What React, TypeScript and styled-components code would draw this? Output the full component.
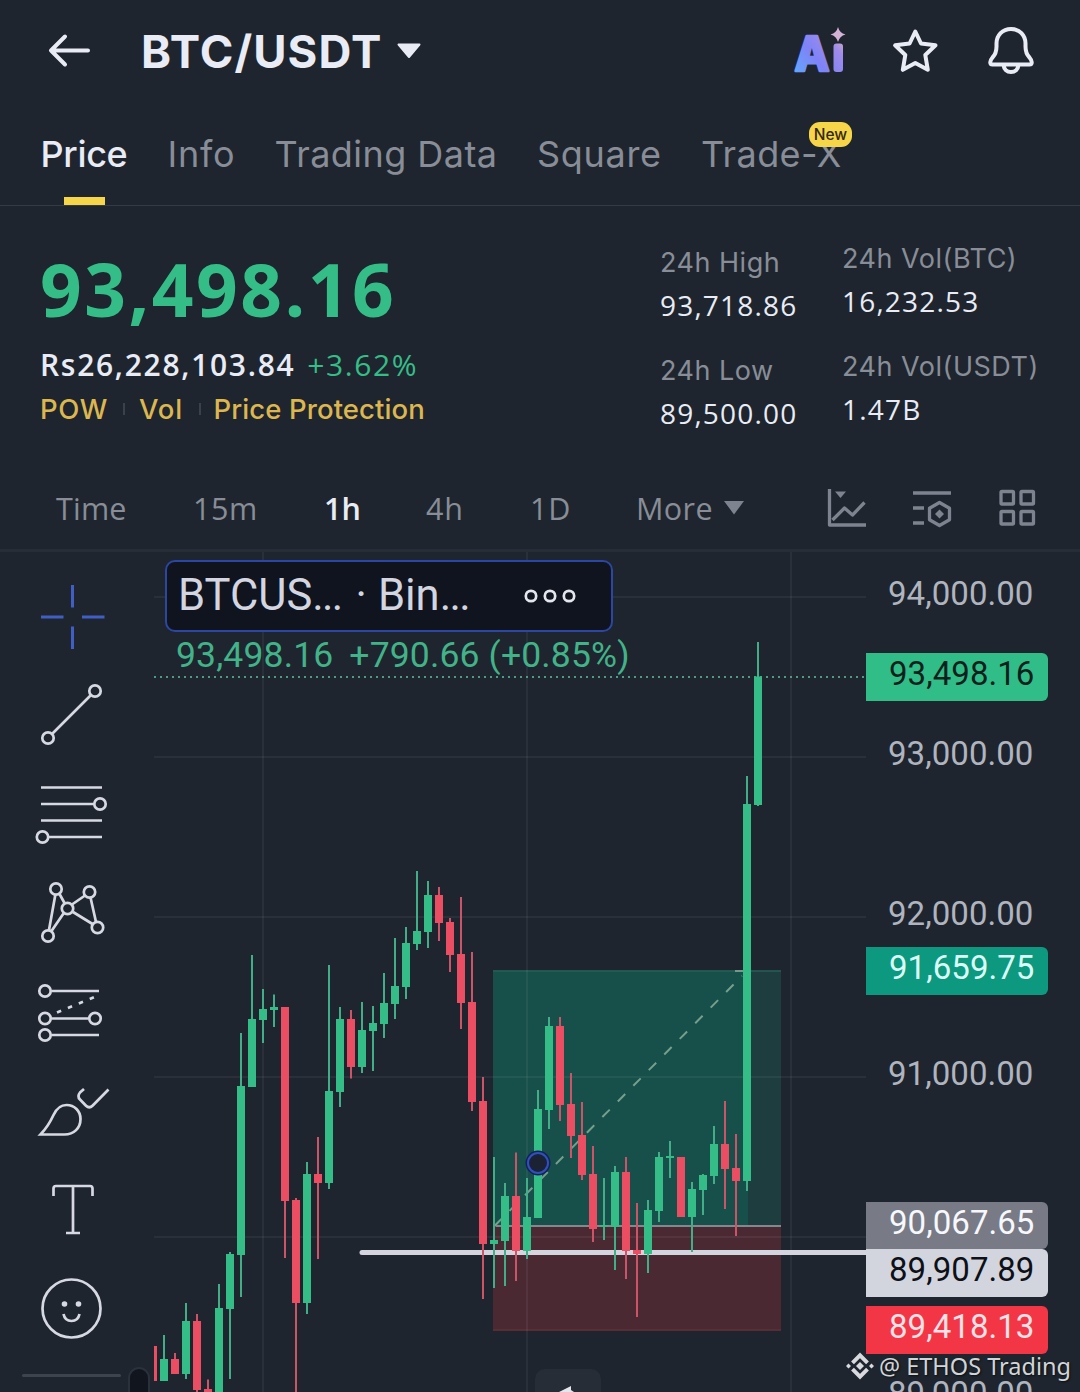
import React from "react";
import styled, { createGlobalStyle } from "styled-components";

const c = {
  bg: "#1e252e",
  text: "#e9ecf5",
  muted: "#888d97",
  icon: "#7e8390",
  tool: "#d6d9e2",
  green: "#35bd88",
  red: "#eb4e63",
  yellow: "#f7d549",
  gold: "#dcb64f",
};

const numerals = `"Open Sans", "Liberation Sans", sans-serif`;

const GlobalStyle = createGlobalStyle`
  *, *::before, *::after { box-sizing: border-box; }
  body { margin: 0; background: ${c.bg}; }
`;

const Page = styled.main`
  position: relative;
  width: 1080px;
  height: 1392px;
  overflow: hidden;
  display: flex;
  flex-direction: column;
  background: ${c.bg};
  color: ${c.text};
  font-family: Inter, "Liberation Sans", sans-serif;
  white-space: nowrap;
  svg { display: block; flex: none; }
`;

/* ---------- header ---------- */

const Header = styled.header`
  height: 102px;
  display: flex;
  align-items: center;
  padding: 0 44px 0 48px;
`;

const Title = styled.h1`
  width: 256px;
  margin: 0 0 0 51px;
  font-size: 45.5px;
  font-weight: 650;
  line-height: 60px;
  padding-top: 1px;
  letter-spacing: 1.1px;
`;

const Actions = styled.div`
  margin-left: auto;
  display: flex;
  align-items: center;
  gap: 48px;
  svg:first-child { margin-right: -1.5px; }
`;

const Tabs = styled.nav`
  height: 104px;
  display: flex;
  padding-left: 40.5px;
  border-bottom: 1px solid #343b46;
`;

const Tab = styled.div<{ $active?: boolean; $track: number; $width: number }>`
  position: relative;
  width: ${(p) => p.$width}px;
  height: 103px;
  padding-top: 0.5px;
  line-height: 103px;
  font-size: 36px;
  font-weight: ${(p) => (p.$active ? 500 : 400)};
  letter-spacing: ${(p) => p.$track}px;
  color: ${(p) => (p.$active ? c.text : c.muted)};
  ${(p) =>
    p.$active &&
    `&::after {
      content: "";
      position: absolute;
      left: 23.5px;
      bottom: 0;
      width: 41px;
      height: 8px;
      background: ${c.yellow};
    }`}
`;

const NewBadge = styled.span`
  position: absolute;
  left: 108px;
  top: 20px;
  width: 43px;
  height: 25px;
  border-radius: 11px;
  background: ${c.yellow};
  color: #33290c;
  font-size: 15.5px;
  font-weight: 500;
  line-height: 25px;
  letter-spacing: 0;
  text-align: center;
`;

/* ---------- summary ---------- */

const Summary = styled.section`
  height: 262px;
  display: grid;
  grid-template-columns: 620px 182px 1fr;
  padding-left: 40px;
`;

const PriceBlock = styled.div`
  padding-top: 41px;
`;

const BigPrice = styled.div`
  height: 96px;
  line-height: 84px;
  font-family: ${numerals};
  font-size: 73px;
  font-weight: 700;
  letter-spacing: 2.5px;
  color: ${c.green};
`;

const Fiat = styled.div`
  display: flex;
  gap: 12px;
  line-height: 44px;
  font-family: ${numerals};
  font-size: 30px;
  font-weight: 600;
  letter-spacing: 1.7px;
`;

const Change = styled.span`
  font-weight: 400;
  letter-spacing: 1.6px;
  color: ${c.green};
`;

const Tags = styled.div`
  display: grid;
  grid-template-columns: 83px 16px 59.5px 15px auto;
  align-items: center;
  justify-content: start;
  line-height: 44px;
  font-size: 27.5px;
  font-weight: 500;
  color: ${c.gold};
`;

const Tag = styled.span<{ $track: number }>`
  letter-spacing: ${(p) => p.$track}px;
`;

const Separator = styled.i`
  width: 2px;
  height: 12px;
  background: #3a414c;
`;

const Stats = styled.dl<{ $raised?: boolean }>`
  margin: 0;
  padding-top: ${(p) => (p.$raised ? 31 : 35)}px;
  display: flex;
  flex-direction: column;
  font-size: 27px;
  line-height: 43px;
`;

const StatLabel = styled.dt`
  letter-spacing: 0.5px;
  color: ${c.muted};
`;

const StatValue = styled.dd`
  margin: 0 0 22px;
  font-family: ${numerals};
  font-size: 28px;
  letter-spacing: 1.2px;
  color: ${c.text};
`;

/* ---------- timeframes ---------- */

const Timeframes = styled.nav`
  height: 81px;
  display: grid;
  grid-template-columns: 137px 131px 102px 104px 106px 88px 103px 85px 86px 1fr;
  align-items: center;
  padding: 0 0 1px 56px;
  font-family: ${numerals};
  font-size: 30.5px;
  color: ${c.muted};
`;

const Frame = styled.span<{ $active?: boolean; $track: number }>`
  letter-spacing: ${(p) => p.$track}px;
  font-weight: ${(p) => (p.$active ? 600 : 400)};
  color: ${(p) => (p.$active ? c.text : c.muted)};
`;

/* ---------- chart ---------- */

const ChartArea = styled.section`
  position: relative;
  height: 843px;
  display: grid;
  grid-template-columns: 154px 712px 214px;
  border-top: 3px solid #262d37;
  font-family: Roboto, "Liberation Sans", sans-serif;
`;

const Tools = styled.aside`
  position: relative;
  height: 840px;
  padding-top: 15px;
  overflow: hidden;
`;

const ToolDivider = styled.div`
  width: 99px;
  height: 3px;
  margin: 15px 0 0 22px;
  border-radius: 2px;
  background: #3d444e;
`;

const Handle = styled.div`
  position: absolute;
  left: 128px;
  top: 815px;
  width: 22px;
  height: 40px;
  border: 2px solid #2a313b;
  border-radius: 11px;
  background: #11151e;
`;

const Plot = styled.div`
  position: relative;
  height: 840px;
  overflow: hidden;
`;

const Legend = styled.div`
  position: absolute;
  left: 11px;
  top: 8px;
`;

const Symbol = styled.div`
  width: 448px;
  height: 72px;
  display: flex;
  align-items: center;
  padding: 0 34px 2px 11px;
  border: 2px solid #2b46a3;
  border-radius: 10px;
  background: #10141e;
  color: #d3d6e0;
  font-size: 43.5px;
  svg { margin: 2px 0 0 auto; }
`;

const Ellipsis = styled.span`
  letter-spacing: -1.7px;
`;

const Dot = styled.span`
  margin: 0 11px 0 14px;
`;

const Ohlc = styled.div`
  display: flex;
  gap: 16px;
  padding-left: 11px;
  font-size: 35.5px;
  line-height: 46px;
  letter-spacing: 0.15px;
  color: #42b389;
`;

const BackButton = styled.div`
  position: absolute;
  left: 381px;
  top: 817px;
  width: 66px;
  height: 46px;
  border-radius: 10px;
  background: #272d37;
`;

const Axis = styled.div`
  height: 840px;
  overflow: hidden;
`;

const AxisItem = styled.div<{ $gap: number; $h?: number; $bg?: string; $fg?: string }>`
  width: 182px;
  height: ${(p) => p.$h ?? 48}px;
  margin-top: ${(p) => p.$gap}px;
  padding-left: ${(p) => (p.$bg ? 23 : 22)}px;
  border-radius: 0 6px 6px 0;
  background: ${(p) => p.$bg ?? "transparent"};
  color: ${(p) => p.$fg ?? "#b0b4bf"};
  font-size: 33px;
  line-height: 42px;
  letter-spacing: 0.05px;
`;

const Watermark = styled.div`
  position: absolute;
  left: 846px;
  top: 1350.5px;
  display: flex;
  align-items: center;
  gap: 5px;
  height: 30px;
  color: #d2d4d8;
  font: 400 23.5px/30px "Noto Sans", sans-serif;
  text-shadow: 1px 1px 2px rgba(0, 0, 0, 0.6);
`;

/* ---------- data ---------- */

// [up, high, body top, body bottom, low] in page pixels; one candle every 11px
type Candle = [0 | 1, number, number, number, number];
const candles: Candle[] = [
  [0, 1346, 1346, 1381, 1381], [1, 1335, 1359, 1381, 1381], [0, 1353, 1359, 1374, 1374],
  [1, 1303, 1321, 1374, 1379], [0, 1314, 1321, 1390, 1400], [0, 1379.5, 1389, 1400, 1400],
  [1, 1284, 1308, 1400, 1400], [1, 1252, 1254, 1309, 1379], [1, 1033, 1086, 1255, 1297],
  [1, 955, 1019, 1087, 1087], [1, 989, 1009, 1020, 1043], [1, 994.5, 1007, 1010, 1027],
  [0, 1007, 1007, 1201, 1258], [0, 1198, 1200, 1303, 1400], [1, 1162, 1174, 1303, 1314],
  [0, 1137, 1174, 1183, 1259], [1, 965, 1091, 1183, 1189], [1, 1007, 1019, 1092, 1107],
  [0, 1010, 1019, 1067, 1078.5], [1, 1002, 1030, 1067, 1073], [1, 1006, 1023, 1031, 1071],
  [1, 973, 1003, 1024, 1038], [1, 938, 986, 1004, 1019], [1, 927, 943, 987, 999],
  [1, 871, 931, 944, 950], [1, 881, 895, 932, 948], [0, 887, 895, 923, 941],
  [0, 918, 922, 955, 972], [0, 897, 954, 1003, 1029], [0, 952, 1002, 1102, 1111],
  [0, 1077, 1101, 1244, 1299], [1, 1157, 1240, 1244, 1288], [1, 1183, 1196, 1241, 1286],
  [0, 1152.5, 1196, 1251, 1281], [1, 1178, 1217, 1251, 1259], [1, 1090, 1109, 1218, 1218],
  [1, 1017, 1026, 1110, 1129], [0, 1017, 1026, 1105, 1121], [0, 1073, 1104, 1136, 1158],
  [0, 1102, 1135, 1175, 1180], [0, 1146, 1174, 1229, 1242], [1, 1178, 1225, 1226.5, 1240],
  [1, 1166, 1172, 1227, 1270], [0, 1157, 1172, 1251, 1279], [0, 1203, 1250, 1254, 1317],
  [1, 1200, 1210, 1254, 1273], [1, 1152, 1157, 1211, 1222], [1, 1141, 1156, 1158, 1178],
  [0, 1157, 1157, 1217, 1217], [1, 1182, 1189, 1217, 1252], [1, 1174, 1175, 1190, 1215],
  [1, 1126, 1144, 1176, 1184], [0, 1101, 1144, 1169, 1209], [0, 1134, 1168, 1181, 1236],
  [1, 776, 804, 1181, 1191], [1, 642, 676.5, 805, 806],
];

const gridY = [597, 757, 917, 1077, 1237];
const gridX = [263, 527, 791];

const axisItems = [
  { t: "94,000.00", gap: 21 },
  { t: "93,498.16", gap: 32, bg: "#31bd87", fg: "#0b1f1c" },
  { t: "93,000.00", gap: 32 },
  { t: "92,000.00", gap: 112 },
  { t: "91,659.75", gap: 6, bg: "#0d9880", fg: "#dcfff6" },
  { t: "91,000.00", gap: 58 },
  { t: "90,067.65", gap: 101, h: 47, bg: "#787b86", fg: "#f7f8fc" },
  { t: "89,907.89", gap: 0, bg: "#d2d5de", fg: "#0d1017" },
  { t: "89,418.13", gap: 9, bg: "#f23645", fg: "#ffe3e8" },
  { t: "89,000.00", gap: 19 },
];

/* ---------- drawings ---------- */

function CandleChart() {
  return (
    <svg width="712" height="840" viewBox="154 552 712 840">
      <rect x="493" y="970.5" width="288" height="255.5" fill="#1d3d3e" />
      <rect x="493" y="970.5" width="255" height="255.5" fill="#174f4a" />
      <rect x="493" y="1226" width="288" height="104.5" fill="#4b2933" />
      <path d="M493 971H781" stroke="#265f55" strokeWidth="1.5" />
      <path d="M493 1330H781" stroke="#5f3039" strokeWidth="1.5" />
      <g stroke="#fff" strokeOpacity=".055" strokeWidth="2">
        {gridY.map((y) => <path key={y} d={`M154 ${y}H866`} />)}
        {gridX.map((x) => <path key={x} d={`M${x} 552V1392`} />)}
      </g>
      <path d="M494 1226.500L742 976" stroke="#7fa893" strokeOpacity=".9" strokeWidth="2" strokeDasharray="10.5 11.5" />
      <path d="M735 971H744" stroke="#74998a" strokeWidth="2" />
      <path d="M496 1226H781" stroke="#82888c" strokeWidth="2" />
      <path d="M362 1252.500H866" stroke="#d3d4de" strokeWidth="5" />
      <circle cx="362" cy="1252.500" r="2.500" fill="#d3d4de" />
      <path d="M154 677H866" stroke="#4f9b83" strokeWidth="2" strokeDasharray="2 4" />
      {candles.map(([up, high, top, bottom, low], i) => {
        const x = 153 + i * 11;
        return (
          <g key={i}>
            <rect x={x - 1} y={high} width="2" height={low - high} fill={up ? "#41ae88" : "#cb5468"} />
            <rect x={x - 4} y={top} width="8" height={bottom - top} fill={up ? c.green : c.red} />
          </g>
        );
      })}
      <circle cx="538" cy="1163" r="10.500" fill="#1a2233" stroke="#14205c" strokeWidth="4" />
      <circle cx="538" cy="1163" r="10" fill="none" stroke="#3350b4" strokeWidth="2" />
    </svg>
  );
}

const toolDrawings: React.ReactNode[] = [
  <path key="cross" stroke="#3f5fc4" strokeWidth="3" d="M72.500 585v22.500M72.500 626.500V649M41 617h22.500M82 617h22.500" />,
  <g key="trend">
    <path d="M52.500 733.500L90.500 695.500" />
    <circle cx="48" cy="738" r="5.700" /><circle cx="95" cy="691" r="5.700" />
  </g>,
  <g key="fib">
    <path d="M41 787.500h61M41 804h53M41 820.500h61M49 837h53" />
    <circle cx="100" cy="804" r="5.700" /><circle cx="42.500" cy="837" r="5.700" />
  </g>,
  <g key="pattern">
    <path d="M55.300 895L49 930M59.500 894l5 9M72 904.500l13-9M90.500 897.500l5.500 24.500M73 912l19.500 12M63.500 913.500L51.500 931" />
    <circle cx="56" cy="889" r="5.700" /><circle cx="89.500" cy="892" r="5.700" /><circle cx="67.500" cy="908.500" r="5.700" />
    <circle cx="97.500" cy="927.500" r="5.700" /><circle cx="48" cy="936" r="5.700" />
  </g>,
  <g key="position">
    <path d="M51.500 991H99M51.500 1018.500h37M51.500 1035H99" />
    <path d="M57 1012.500L97 996" strokeDasharray="4.500 7.300" />
    <circle cx="45" cy="991" r="5.700" /><circle cx="45" cy="1018.500" r="5.700" /><circle cx="95" cy="1018.500" r="5.700" /><circle cx="45" cy="1035" r="5.700" />
  </g>,
  <path key="brush" d="M40.500 1134.500c7.500-8 10.500-14 13-19.500c3-6.500 7-10 13-10c8 0 14 6 14 14c0 9-6.500 15.500-16 15.500zM84 1089l-4 3.500c-2 2.500-2 5 0 7l6 6.200c2 2 4.500 2 6.500 0L108.500 1089.500" />,
  <path key="text" d="M53.500 1196v-7.500q0-2.500 2.500-2.500h34q2.500 0 2.500 2.500v7.500M73 1186v47M66 1233h14" />,
  <g key="emoji">
    <circle cx="71.500" cy="1308.500" r="29" />
    <path d="M63.500 1314c1 5 4 7 8 7s7-2 8-7" />
    <circle cx="64.500" cy="1304" r="2.800" fill={c.tool} stroke="none" /><circle cx="78.500" cy="1304" r="2.800" fill={c.tool} stroke="none" />
  </g>,
];

const ToolIcon = ({ index, children }: { index: number; children: React.ReactNode }) => (
  <svg width="154" height="99" viewBox={`0 ${567 + index * 99} 154 99`} fill="none" stroke={c.tool} strokeWidth="2.700">
    {children}
  </svg>
);

const AiLogo = () => (
  <svg width="54" height="50" viewBox="793 26 54 50">
    <defs>
      <linearGradient id="ai" gradientUnits="userSpaceOnUse" x1="794" y1="72" x2="846" y2="32">
        <stop offset="0" stopColor="#62a8fb" />
        <stop offset=".4" stopColor="#7f83f7" />
        <stop offset=".75" stopColor="#a08ceb" />
        <stop offset="1" stopColor="#f0bda9" />
      </linearGradient>
    </defs>
    <text x="813" y="70.500" textAnchor="middle" textLength="35" lengthAdjust="spacingAndGlyphs" fontFamily="Inter" fontWeight="800" fontSize="48" fill="url(#ai)" stroke="url(#ai)" strokeWidth="2.500" strokeLinejoin="round">A</text>
    <rect x="834.500" y="43.500" width="9.500" height="28.500" rx="3" fill="url(#ai)" />
    <path d="M839 27q1.500 6 7.500 7.500q-6 1.500-7.500 7.500q-1.500-6-7.500-7.500q6-1.500 7.500-7.500z" fill="#d3b3d8" />
  </svg>
);

export default function App() {
  return (
    <Page>
      <GlobalStyle />
      <Header>
        <svg width="42" height="36" viewBox="48 33 42 36" fill="none" stroke={c.text} strokeWidth="4" strokeLinecap="round" strokeLinejoin="round">
          <path d="M88 50.500H51M65 36.500L51 50.500L65 64.500" />
        </svg>
        <Title>BTC/USDT</Title>
        <svg width="24" height="16" viewBox="0 0 24 16" fill={c.text} stroke={c.text} strokeWidth="2" strokeLinejoin="round">
          <path d="M1.500 1.500h21L12 14z" />
        </svg>
        <Actions>
          <AiLogo />
          <svg width="46" height="48" viewBox="892 28 46 48" fill="none" stroke={c.text} strokeWidth="4" strokeLinejoin="round">
            <path d="M915.300 32.500L921 44.500L935.500 46.300L925.300 56L927.800 70.800L915.300 64L902.800 70.800L905.300 56L895.100 46.300L909.600 44.500Z" />
          </svg>
          <svg width="50" height="50" viewBox="986 26 50 50" fill="none" stroke={c.text} strokeWidth="4" strokeLinejoin="round">
            <path d="M1011 29c-8.500 0-14.500 6.300-14.500 14.500v3c0 5.500-1 8-4 11c-3 3.500-3 7 0 7h37c3 0 3-3.500 0-7c-3-3-4-5.500-4-11v-3c0-8.200-6-14.500-14.500-14.500zM1003.500 65c.5 4.500 3.500 7 7.500 7s7-2.500 7.500-7" />
          </svg>
        </Actions>
      </Header>

      <Tabs>
        <Tab $active $track={-0.3} $width={127}>Price</Tab>
        <Tab $track={0.8} $width={107}>Info</Tab>
        <Tab $track={0.45} $width={262.5}>Trading Data</Tab>
        <Tab $track={0.7} $width={164}>Square</Tab>
        <Tab $track={0.4} $width={142}>Trade-X<NewBadge>New</NewBadge></Tab>
      </Tabs>

      <Summary>
        <PriceBlock>
          <BigPrice>93,498.16</BigPrice>
          <Fiat>Rs26,228,103.84<Change>+3.62%</Change></Fiat>
          <Tags>
            <Tag $track={0.6}>POW</Tag>
            <Separator />
            <Tag $track={0.8}>Vol</Tag>
            <Separator />
            <Tag $track={0.1}>Price Protection</Tag>
          </Tags>
        </PriceBlock>
        <Stats>
          <StatLabel>24h High</StatLabel><StatValue>93,718.86</StatValue>
          <StatLabel>24h Low</StatLabel><StatValue>89,500.00</StatValue>
        </Stats>
        <Stats $raised>
          <StatLabel>24h Vol(BTC)</StatLabel><StatValue>16,232.53</StatValue>
          <StatLabel>24h Vol(USDT)</StatLabel><StatValue>1.47B</StatValue>
        </Stats>
      </Summary>

      <Timeframes>
        <Frame $track={0.2}>Time</Frame>
        <Frame $track={0.6}>15m</Frame>
        <Frame $active $track={0}>1h</Frame>
        <Frame $track={0.7}>4h</Frame>
        <Frame $track={0.7}>1D</Frame>
        <Frame $track={0.4}>More</Frame>
        <svg width="20" height="14" viewBox="0 0 20 14" fill={c.icon}><path d="M0 0H20L10 13.500Z" /></svg>
        <svg width="40" height="40" viewBox="827 488 40 40" fill="none" stroke={c.icon} strokeWidth="3.300">
          <path d="M829.500 489V525H866M832.500 520L844.500 508L852.500 515L864.500 502.500" strokeLinejoin="round" />
          <path d="M835 491.500h11l-5.500 6.500z" fill={c.icon} stroke="none" />
        </svg>
        <svg width="40" height="40" viewBox="912 488 40 40" fill="none" stroke={c.icon} strokeWidth="3.300">
          <path d="M913 493h38M913 508h11M913 523h11" />
          <path d="M939.500 502.500l10 5.700v11.500l-10 5.800l-10-5.800v-11.500z" strokeLinejoin="round" />
          <path d="M939.500 509.500l4.500 4.500l-4.500 4.500l-4.500-4.500z" fill={c.icon} stroke="none" />
        </svg>
        <svg width="40" height="40" viewBox="998 488 40 40" fill="none" stroke={c.icon} strokeWidth="3.300">
          {[[1001, 491.5], [1021, 491.5], [1001, 511.5], [1021, 511.5]].map(([x, y]) => (
            <rect key={`${x}-${y}`} x={x} y={y} width="12.500" height="12.500" rx="1" />
          ))}
        </svg>
      </Timeframes>

      <ChartArea>
        <Tools>
          {toolDrawings.map((drawing, i) => <ToolIcon key={i} index={i}>{drawing}</ToolIcon>)}
          <ToolDivider />
          <Handle />
        </Tools>
        <Plot>
          <CandleChart />
          <Legend>
            <Symbol>
              <span>BTCUS<Ellipsis>...</Ellipsis></span><Dot>·</Dot><span>Bin<Ellipsis>...</Ellipsis></span>
              <svg width="54" height="16" viewBox="0 0 54 16" fill="none" stroke="#e4e6ee" strokeWidth="2.700">
                <circle cx="8" cy="8" r="5.200" /><circle cx="27" cy="8" r="5.200" /><circle cx="46" cy="8" r="5.200" />
              </svg>
            </Symbol>
            <Ohlc><span>93,498.16</span><span>+790.66 (+0.85%)</span></Ohlc>
          </Legend>
          <BackButton>
            <svg width="66" height="23" viewBox="535 1369 66 23"><path d="M559 1392L571 1386V1390L574 1392Z" fill="#e4e6ee" /></svg>
          </BackButton>
        </Plot>
        <Axis>
          {axisItems.map((a) => (
            <AxisItem key={a.t} $gap={a.gap} $h={a.h} $bg={a.bg} $fg={a.fg}>{a.t}</AxisItem>
          ))}
        </Axis>
      </ChartArea>

      <Watermark>
        <svg width="28" height="28" viewBox="-14 -14 28 28" fill="#d8dade">
          <path d="M0-4L4 0L0 4L-4 0ZM-11.500-2.500L-9 0L-11.500 2.500L-14 0ZM11.500-2.500L14 0L11.500 2.500L9 0Z" />
          <path d="M-7.500-3.200L0-10.600L7.500-3.200M-7.500 3.200L0 10.600L7.500 3.200" fill="none" stroke="#d8dade" strokeWidth="4" />
        </svg>
        <span>@ ETHOS Trading</span>
      </Watermark>
    </Page>
  );
}
